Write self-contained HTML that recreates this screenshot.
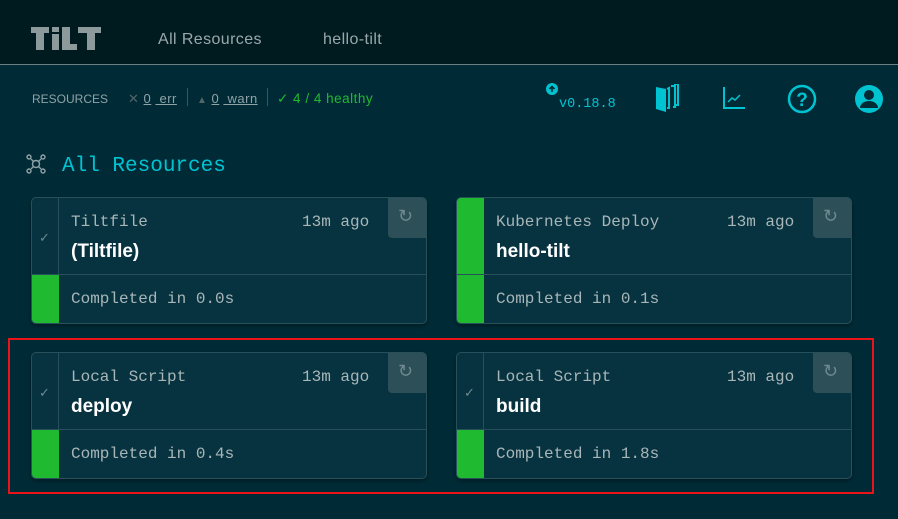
<!DOCTYPE html>
<html><head><meta charset="utf-8"><style>
*{box-sizing:border-box;margin:0;padding:0}
body{width:898px;height:519px;background:#002b36;font-family:"Liberation Sans",sans-serif;position:relative;overflow:hidden}
.hdr{position:absolute;left:0;top:0;width:898px;height:65px;background:#001b20;border-bottom:1px solid #6b7f84}
.nav{position:absolute;top:31px;color:#9aa8ab;font-size:16px;letter-spacing:0.4px}
.mono{font-family:"Liberation Mono","DejaVu Sans Mono",monospace}
.card{position:absolute;width:396px;height:127px;background:#073340;border:1px solid #28505a;border-radius:5px;overflow:hidden;box-shadow:0 2px 4px rgba(0,0,0,.35)}
.st{position:absolute;left:0;top:0;width:27px;height:77px;border-right:1px solid #28505a}
.st.g{background:#20ba31;border-right:none}
.st2{position:absolute;left:0;top:77px;width:27px;height:50px;background:#20ba31}
.mid{position:absolute;left:0;top:76px;width:396px;height:1px;background:#28505a}
.type{position:absolute;left:39px;top:15px;font-size:16px;color:#a8b6b8}
.ago{position:absolute;left:270px;top:15px;font-size:16px;color:#a8b6b8}
.name{position:absolute;left:39px;top:43px;font-size:19px;font-weight:bold;color:#fff}
.done{position:absolute;left:39px;top:92px;font-size:16px;color:#a8b6b8}
.rb{position:absolute;right:0;top:0;width:38px;height:40px;background:#2d4f57;border-radius:0 0 0 4px}
.chk{position:absolute;left:7px;top:32px;color:#6e8a90;font-size:13px}
</style></head><body>
<div class="hdr">
<svg style="position:absolute;left:31px;top:26px" width="70" height="24" viewBox="0 0 70 24" fill="#8d9a9c"><path d="M0 1h18v6h-5v17h-8V7H0z"/><path d="M21 1h7v5h-7zM21 8h7v16h-7z"/><path d="M31 1h8v17h7v6H31z"/><path d="M47 1h23v6h-6v17h-8V7h-9z"/></svg>
<div class="nav" style="left:158px">All Resources</div>
<div class="nav" style="left:323px">hello-tilt</div>
</div>
<div style="position:absolute;left:32px;top:92px;font-size:12px;color:#8fa3a8">RESOURCES</div>
<div style="position:absolute;left:128px;top:91px;font-size:13px;color:#8fa3a8;letter-spacing:0.5px"><span style="color:#51656a">✕</span> <u>0</u> <u>&nbsp;err</u></div>
<div style="position:absolute;left:187px;top:88px;width:1px;height:18px;background:#3d555b"></div>
<div style="position:absolute;left:197px;top:91px;font-size:13px;color:#8fa3a8;letter-spacing:0.5px"><span style="color:#51656a;font-size:10px">▲</span> <u>0</u> <u>&nbsp;warn</u></div>
<div style="position:absolute;left:267px;top:88px;width:1px;height:18px;background:#3d555b"></div>
<div style="position:absolute;left:277px;top:91px;font-size:13.5px;color:#20ba31;letter-spacing:0.5px">✓ 4 / 4 healthy</div>
<svg style="position:absolute;left:546px;top:83px" width="12" height="12" viewBox="0 0 12 12"><circle cx="6" cy="6" r="6" fill="#00c3d2"/><path d="M6 9V3.5M3.5 6L6 3.5 8.5 6" stroke="#002b36" stroke-width="1.6" fill="none"/></svg>
<div class="mono" style="position:absolute;left:559px;top:97px;font-size:13.5px;color:#00c3d2">v0.18.8</div>
<svg style="position:absolute;left:656px;top:84px" width="24" height="29" viewBox="0 0 24 29"><path d="M0 3l10 2v23l-10-3z" fill="#00c3d2"/><path d="M11 5l2-1v20h-2M15 2h4v21h-2" stroke="#00c3d2" stroke-width="2" fill="none"/><path d="M18 0h4v21h-2" stroke="#00c3d2" stroke-width="2" fill="none"/></svg>
<svg style="position:absolute;left:723px;top:87px" width="23" height="22" viewBox="0 0 23 22"><path d="M1 0v21h21" stroke="#00c3d2" stroke-width="2" fill="none"/><path d="M5 15l4-4 3 2 5-5" stroke="#00c3d2" stroke-width="1.5" fill="none"/></svg>
<svg style="position:absolute;left:787px;top:84px" width="30" height="30" viewBox="0 0 30 30"><circle cx="15" cy="15" r="13" stroke="#00c3d2" stroke-width="2.5" fill="none"/><text x="15" y="22" text-anchor="middle" font-family="Liberation Sans" font-weight="bold" font-size="19" fill="#00c3d2">?</text></svg>
<svg style="position:absolute;left:854px;top:84px" width="30" height="30" viewBox="0 0 30 30"><circle cx="15" cy="15" r="14" fill="#00c3d2"/><circle cx="15" cy="11" r="5" fill="#002b36"/><path d="M6 24a9 7 0 0 1 18 0z" fill="#002b36"/></svg>
<svg style="position:absolute;left:26px;top:154px" width="20" height="20" viewBox="0 0 20 20" stroke="#8fa3a8" fill="none" stroke-width="1.4"><circle cx="10" cy="10" r="3.5"/><circle cx="3" cy="3" r="2"/><circle cx="17" cy="3" r="2"/><circle cx="3" cy="17" r="2"/><circle cx="17" cy="17" r="2"/><path d="M5 5l2.5 2.5M15 5l-2.5 2.5M5 15l2.5-2.5M15 15l-2.5-2.5"/></svg>
<div class="mono" style="position:absolute;left:62px;top:155px;font-size:21px;color:#00c3d2">All Resources</div>

<div class="card" style="left:31px;top:197px"><div class="st"><span class="chk">✓</span></div><div class="st2"></div><div class="mid"></div><div class="type mono">Tiltfile</div><div class="ago mono">13m ago</div><div class="name">(Tiltfile)</div><div class="done mono">Completed in 0.0s</div><div class="rb"><span style="position:absolute;left:10px;top:8px;color:#6e8a90;font-size:18px">↻</span></div></div>
<div class="card" style="left:456px;top:197px"><div class="st g"></div><div class="st2"></div><div class="mid"></div><div class="type mono">Kubernetes Deploy</div><div class="ago mono">13m ago</div><div class="name">hello-tilt</div><div class="done mono">Completed in 0.1s</div><div class="rb"><span style="position:absolute;left:10px;top:8px;color:#6e8a90;font-size:18px">↻</span></div></div>
<div class="card" style="left:31px;top:352px"><div class="st"><span class="chk">✓</span></div><div class="st2"></div><div class="mid"></div><div class="type mono">Local Script</div><div class="ago mono">13m ago</div><div class="name">deploy</div><div class="done mono">Completed in 0.4s</div><div class="rb"><span style="position:absolute;left:10px;top:8px;color:#6e8a90;font-size:18px">↻</span></div></div>
<div class="card" style="left:456px;top:352px"><div class="st"><span class="chk">✓</span></div><div class="st2"></div><div class="mid"></div><div class="type mono">Local Script</div><div class="ago mono">13m ago</div><div class="name">build</div><div class="done mono">Completed in 1.8s</div><div class="rb"><span style="position:absolute;left:10px;top:8px;color:#6e8a90;font-size:18px">↻</span></div></div>
<div style="position:absolute;left:8px;top:338px;width:866px;height:156px;border:2px solid #e8141a"></div>
</body></html>
